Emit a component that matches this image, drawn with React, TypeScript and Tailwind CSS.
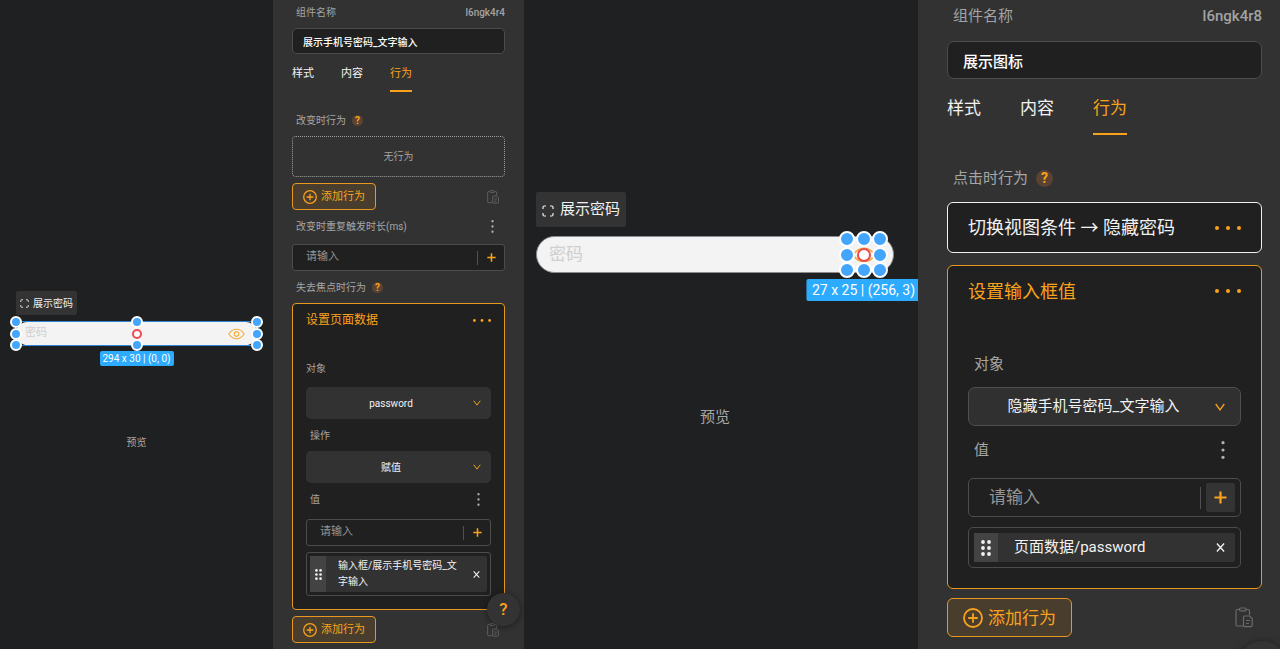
import clsx from "clsx";
import type { ReactNode } from "react";

type Sized = { lg?: boolean };

const handlePositions = [
  "left-0 top-0",
  "left-1/2 top-0",
  "left-full top-0",
  "left-0 top-1/2",
  "left-full top-1/2",
  "left-0 top-full",
  "left-1/2 top-full",
  "left-full top-full",
];

function ScanIcon({ className }: { className?: string }) {
  return (
    <svg viewBox="0 0 12 12" fill="none" stroke="currentColor" strokeWidth="1.2" className={className} aria-hidden="true">
      <path d="M1 4V2.2Q1 1 2.2 1H4M8 1h1.8Q11 1 11 2.2V4M11 8v1.8Q11 11 9.8 11H8M4 11H2.2Q1 11 1 9.8V8" />
    </svg>
  );
}

function EyeIcon({ className }: { className?: string }) {
  return (
    <svg viewBox="0 0 18 12" fill="none" stroke="currentColor" strokeWidth="1.2" strokeLinejoin="round" className={className} aria-hidden="true">
      <path d="M.8 6C3 2.8 5.5 1 9 1s6 1.8 8.200 5C15 9.2 12.500 11 9 11S3 9.2.8 6Z" />
      <path d="m9 3.4 2.300 1.300v2.600L9 8.600 6.700 7.300V4.700Z" />
    </svg>
  );
}

function ClipboardIcon({ className }: { className?: string }) {
  return (
    <svg viewBox="0 0 18 21" fill="none" stroke="currentColor" strokeWidth="1.2" className={className} aria-hidden="true">
      <path d="M4.5 2.5H2.2Q1 2.5 1 3.7v14.1Q1 19 2.2 19H8M11 2.5h2.3q1.2 0 1.2 1.2V8" />
      <rect x="4.5" y="1" width="6.5" height="2.8" rx="1" />
      <path d="M9.7 9h5l2.5 2.5v7q0 1.2-1.2 1.2H9.7q-1.2 0-1.2-1.2v-8.300Q8.5 9 9.7 9ZM11 13.5h4M11 16.5h3" />
    </svg>
  );
}

function PlusCircleIcon({ className }: { className?: string }) {
  return (
    <svg viewBox="0 0 20 20" fill="none" stroke="currentColor" strokeWidth="1.8" className={className} aria-hidden="true">
      <circle cx="10" cy="10" r="9" />
      <path d="M10 5.2v9.6M5.2 10h9.6" />
    </svg>
  );
}

function PlusIcon({ className }: { className?: string }) {
  return (
    <svg viewBox="0 0 14 14" fill="none" stroke="currentColor" strokeWidth="2.4" className={className} aria-hidden="true">
      <path d="M7 .5v13M.5 7h13" />
    </svg>
  );
}

function CloseIcon({ className }: { className?: string }) {
  return (
    <svg viewBox="0 0 10 10" fill="none" stroke="currentColor" strokeWidth="1.5" className={className} aria-hidden="true">
      <path d="m1 .5 8 9M9 .5l-8 9" />
    </svg>
  );
}

function ChevronIcon({ className }: { className?: string }) {
  return (
    <svg viewBox="0 0 10 8" fill="none" stroke="currentColor" strokeWidth="1.3" className={className} aria-hidden="true">
      <path d="M.7 1 5 6.8 9.3 1" />
    </svg>
  );
}

function GripIcon({ className }: { className?: string }) {
  return (
    <svg viewBox="0 0 10 16" fill="currentColor" className={className} aria-hidden="true">
      {[2, 8, 14].map((y) => (
        <g key={y}>
          <circle cx="2" cy={y} r="1.9" />
          <circle cx="8" cy={y} r="1.9" />
        </g>
      ))}
    </svg>
  );
}

function MoreButton({ lg }: Sized) {
  return (
    <button type="button" aria-label="更多" className="text-[#fba21c]">
      <svg viewBox="0 0 26 4" fill="currentColor" className={lg ? "h-1 w-[26px]" : "h-[3px] w-[18px]"}>
        <circle cx="2" cy="2" r="2" />
        <circle cx="13" cy="2" r="2" />
        <circle cx="24" cy="2" r="2" />
      </svg>
    </button>
  );
}

function MenuButton({ lg }: Sized) {
  return (
    <button type="button" aria-label="选项" className={clsx("text-[#b0b0b0]", lg ? "mr-4" : "mr-[11px]")}>
      <svg viewBox="0 0 4 18" fill="currentColor" className={lg ? "h-[18px] w-1" : "h-[13px] w-[3px]"}>
        <circle cx="2" cy="1.7" r="1.6" />
        <circle cx="2" cy="9" r="1.6" />
        <circle cx="2" cy="16.3" r="1.6" />
      </svg>
    </button>
  );
}

function Handles({ lg }: Sized) {
  return (
    <>
      {handlePositions.map((position) => (
        <span
          key={position}
          className={clsx(
            "absolute -translate-1/2 rounded-full border-2 border-white bg-[#43a5fb]",
            lg ? "size-4" : "size-3",
            position,
          )}
        />
      ))}
      <span
        className={clsx(
          "absolute left-1/2 top-1/2 -translate-1/2 rounded-full border-2 border-[#ee4a4f] bg-white",
          lg ? "size-3.5" : "size-2.5",
        )}
      />
    </>
  );
}

function SizeBadge({ lg, children }: Sized & { children: ReactNode }) {
  return (
    <span
      className={clsx(
        "absolute left-1/2 top-full -translate-x-1/2 whitespace-nowrap rounded-[2px] bg-[#2dabff] text-center text-white",
        lg ? "mt-[9px] px-1.5 text-[14px] leading-[22px]" : "mt-1.5 px-[3px] text-[10px] leading-[15px]",
      )}
    >
      {children}
    </span>
  );
}

function ViewChip({ lg }: Sized) {
  return (
    <div
      className={clsx(
        "flex w-fit items-center rounded-[2px] bg-[#333333] text-[#f0f0f0]",
        lg ? "h-[35px] gap-1.5 px-1.5 text-[15px]" : "h-6 gap-1 px-1 text-[10px]",
      )}
    >
      <ScanIcon className={lg ? "mt-0.5 size-3" : "size-[9px]"} />
      展示密码
    </div>
  );
}

function Label({ lg, children }: Sized & { children: ReactNode }) {
  return (
    <div
      className={clsx(
        "flex items-center justify-between text-[#a6a6a6]",
        lg ? "h-[30px] pl-1.5 text-[15px]" : "h-5 pl-1 text-[10px]",
      )}
    >
      {children}
    </div>
  );
}

function EventLabel({ lg, children }: Sized & { children: ReactNode }) {
  return (
    <Label lg={lg}>
      <span className={clsx("flex items-center", lg ? "gap-2" : "gap-1.5")}>
        {children}
        <button
          type="button"
          aria-label="帮助"
          className={clsx(
            "flex items-center justify-center rounded-full bg-[#5a4333] font-bold text-[#fba21c]",
            lg ? "size-[17px] text-[14px]" : "size-[11px] text-[10px]",
          )}
        >
          ?
        </button>
      </span>
    </Label>
  );
}

function PanelHead({ lg, id, name }: Sized & { id: string; name: string }) {
  return (
    <>
      <div
        className={clsx(
          "flex items-center justify-between text-[#a3a3a3]",
          lg ? "h-[33px] pl-1.5 text-[15px]" : "h-6 pl-1 text-[10px]",
        )}
      >
        <label htmlFor={id}>组件名称</label>
        <span className="font-medium">{id}</span>
      </div>
      <input
        id={id}
        defaultValue={name}
        className={clsx(
          "block w-full border border-[#4c4c4c] bg-[#202020] font-medium text-white",
          lg ? "mt-2 h-[38px] rounded-[7px] px-[15px] text-[15px]" : "mt-1 h-[26px] rounded-[5px] px-2.5 text-[10px]",
        )}
      />
      <nav className={clsx("flex text-[#f2f2f2]", lg ? "mt-3.5 gap-[39px] text-[17px]" : "mt-2.5 gap-[27px] text-[11px]")}>
        {["样式", "内容", "行为"].map((tab) => (
          <a
            key={tab}
            href="#"
            className={clsx(
              "border-b-2",
              lg ? "pb-2.5 leading-[30px]" : "pb-1.5 leading-5",
              tab === "行为" ? "border-[#fba21c] text-[#fba21c]" : "border-transparent",
            )}
          >
            {tab}
          </a>
        ))}
      </nav>
    </>
  );
}

function SelectField({ lg, label, value }: Sized & { label: string; value: string }) {
  return (
    <div className="relative">
      <select
        aria-label={label}
        defaultValue={value}
        className={clsx(
          "block w-full appearance-none text-[#f2f2f2] [text-align-last:center]",
          lg
            ? "h-[39px] rounded-[7px] border border-[#4f4f4f] bg-[#303030] pr-[22px] text-[15px]"
            : "h-8 rounded-[5px] bg-[#323232] pr-[15px] text-[10px]",
        )}
      >
        <option>{value}</option>
      </select>
      <ChevronIcon
        className={clsx(
          "pointer-events-none absolute top-1/2 -translate-y-1/2 text-[#fba21c]",
          lg ? "right-4 h-2 w-2.5" : "right-2.5 h-1.5 w-2",
        )}
      />
    </div>
  );
}

function ValueInput({ lg, label }: Sized & { label: string }) {
  return (
    <div
      className={clsx(
        "flex items-center border border-[#4c4c4c] bg-[#202020]",
        lg ? "h-[39px] rounded-[5px] pr-[5px]" : "h-[27px] rounded-[3px]",
      )}
    >
      <input
        aria-label={label}
        placeholder="请输入"
        className={clsx(
          "min-w-0 flex-1 bg-transparent text-white placeholder:text-[#959595]",
          lg ? "pl-5 text-[17px]" : "pl-[13px] text-[11px]",
        )}
      />
      <span className={clsx("w-px bg-[#505050]", lg ? "h-[22px]" : "h-3.5")} />
      <button
        type="button"
        aria-label="添加"
        className={clsx(
          "flex items-center justify-center text-[#fba21c]",
          lg ? "ml-[5px] size-[29px] rounded-[2px] bg-[#343434]" : "h-full w-[26px]",
        )}
      >
        <PlusIcon className={lg ? "size-[13px]" : "size-[9px]"} />
      </button>
    </div>
  );
}

function BoundValue({ lg, children }: Sized & { children: ReactNode }) {
  return (
    <div
      className={clsx(
        "flex border border-[#4c4c4c]",
        lg ? "mt-2.5 h-[41px] rounded-[5px] p-[5px]" : "mt-1.5 h-11 rounded-[3px] p-[3px]",
      )}
    >
      <div className="flex min-w-0 flex-1 items-center rounded-[2px] bg-[#323232] text-[#f2f2f2]">
        <span className={clsx("flex h-full shrink-0 items-center justify-center bg-[#434343]", lg ? "w-6" : "w-4")}>
          <GripIcon className={lg ? "h-4 w-2.5" : "h-[11px] w-[7px]"} />
        </span>
        <span className={clsx("flex-1", lg ? "pl-4 text-[15px]" : "px-3 text-[10px] leading-4")}>{children}</span>
        <button type="button" aria-label="移除" className={lg ? "mr-2.5" : "mr-[7px]"}>
          <CloseIcon className={lg ? "size-[9px]" : "size-[7px]"} />
        </button>
      </div>
    </div>
  );
}

function AddRow({ lg, className }: Sized & { className: string }) {
  return (
    <div className={clsx("flex items-center justify-between", className)}>
      <button
        type="button"
        className={clsx(
          "flex items-center border border-[#e8971f] bg-[#493d2e] text-[#fba21c]",
          lg
            ? "h-[39px] gap-[5px] rounded-[6px] px-[15px] text-[17px] leading-6"
            : "h-[27px] gap-1 rounded-[4px] px-2.5 text-[11px] leading-4",
        )}
      >
        <PlusCircleIcon className={lg ? "size-5" : "size-3.5"} />
        添加行为
      </button>
      <button type="button" aria-label="粘贴行为" className={clsx("text-[#6a6a6a]", lg ? "mr-[9px]" : "mr-1.5")}>
        <ClipboardIcon className={lg ? "h-[21px] w-[18px]" : "h-3.5 w-3"} />
      </button>
    </div>
  );
}

function InputCanvas() {
  return (
    <section className="overflow-hidden px-4 pt-[291px]">
      <ViewChip />
      <div className="relative mt-1.5 h-[25px] border-y border-[#2f86d6]">
        <div className="flex h-full items-center justify-between rounded-full bg-[#f3f3f3] pl-[9px] pr-3">
          <input
            aria-label="密码"
            placeholder="密码"
            className="min-w-0 flex-1 bg-transparent text-[11px] text-black placeholder:text-[#cfcfcf]"
          />
          <EyeIcon className="h-3 w-[17px] text-[#f7ab3c]" />
        </div>
        <Handles />
        <SizeBadge>294 x 30 | (0, 0)</SizeBadge>
      </div>
      <p className="mt-[87px] text-center text-[10px] leading-5 text-[#a8a8a8]">预览</p>
    </section>
  );
}

function IconCanvas() {
  return (
    <section className="overflow-hidden pl-3 pr-6 pt-48">
      <ViewChip lg />
      <div className="mt-[9px] flex h-[37px] items-center rounded-full border border-[#8c8c8c] bg-[#f3f3f3] pl-3 pr-[13px]">
        <input
          aria-label="密码"
          placeholder="密码"
          className="min-w-0 flex-1 bg-transparent text-[17px] text-black placeholder:text-[#cfcfcf]"
        />
        <div className="relative flex h-[31px] w-[33px] items-center justify-center">
          <EyeIcon className="h-4 w-6 text-[#f7ab3c]" />
          <Handles lg />
          <SizeBadge lg>27 x 25 | (256, 3)</SizeBadge>
        </div>
      </div>
      <p className="mt-[129px] text-center text-[15px] leading-[30px] text-[#a8a8a8]">预览</p>
    </section>
  );
}

function InputPanel() {
  return (
    <aside className="relative bg-[#323232] px-[19px]">
      <PanelHead id="l6ngk4r4" name="展示手机号密码_文字输入" />
      <div className="mt-[18px]">
        <EventLabel>改变时行为</EventLabel>
      </div>
      <div className="mt-1.5 flex h-[41px] items-center justify-center rounded-[4px] border border-dotted border-[#a0a0a0] text-[10px] text-[#a3a3a3]">
        无行为
      </div>
      <AddRow className="mt-1.5" />
      <div className="mt-1.5">
        <Label>
          改变时重复触发时长(ms)
          <MenuButton />
        </Label>
      </div>
      <div className="mt-2">
        <ValueInput label="改变时重复触发时长(ms)" />
      </div>
      <div className="mt-1.5">
        <EventLabel>失去焦点时行为</EventLabel>
      </div>

      <div className="mt-1.5 rounded-[4px] border border-[#e8971f] bg-[#202020] px-[13px] pb-[13px]">
        <div className="flex h-8 items-center justify-between text-[12px] text-[#fba21c]">
          设置页面数据
          <MoreButton />
        </div>
        <p className="mb-2 mt-[23px] text-[10px] leading-5 text-[#a6a6a6]">对象</p>
        <SelectField label="对象" value="password" />
        <div className="my-1.5">
          <Label>操作</Label>
        </div>
        <SelectField label="操作" value="赋值" />
        <div className="mb-2.5 mt-1.5">
          <Label>
            值
            <MenuButton />
          </Label>
        </div>
        <ValueInput label="值" />
        <BoundValue>输入框/展示手机号密码_文字输入</BoundValue>
      </div>
      <AddRow className="mt-1.5" />

      <button
        type="button"
        aria-label="帮助中心"
        className="absolute right-1 top-[593px] size-[33px] rounded-full bg-[#333333] text-[17px] font-medium text-[#fba21c] shadow-[0_1px_6px_rgba(0,0,0,0.45)]"
      >
        ?
      </button>
    </aside>
  );
}

function IconPanel() {
  return (
    <aside className="relative overflow-hidden bg-[#323232] pl-[29px] pr-[18px]">
      <PanelHead lg id="l6ngk4r8" name="展示图标" />
      <div className="mt-7">
        <EventLabel lg>点击时行为</EventLabel>
      </div>
      <div className="mt-[9px] flex h-[51px] items-center justify-between rounded-[6px] border border-[#f0f0f0] bg-[#202020] px-5 text-[18px] text-[#f2f2f2]">
        切换视图条件 → 隐藏密码
        <MoreButton lg />
      </div>

      <div className="mt-3 rounded-[6px] border border-[#e8971f] bg-[#202020] px-5 pb-5">
        <div className="flex h-[50px] items-center justify-between text-[18px] text-[#fba21c]">
          设置输入框值
          <MoreButton lg />
        </div>
        <div className="mb-2 mt-[33px]">
          <Label lg>对象</Label>
        </div>
        <SelectField lg label="对象" value="隐藏手机号密码_文字输入" />
        <div className="mb-[13px] mt-[9px]">
          <Label lg>
            值
            <MenuButton lg />
          </Label>
        </div>
        <ValueInput lg label="值" />
        <BoundValue lg>页面数据/password</BoundValue>
      </div>
      <AddRow lg className="mt-[9px]" />
      <span className="absolute -bottom-10 right-[-6px] size-12 rounded-full bg-[#333333] shadow-[0_1px_8px_rgba(0,0,0,0.45)]" />
    </aside>
  );
}

export default function App() {
  return (
    <main className="grid min-h-screen grid-cols-[273fr_251fr_394fr_362fr] overflow-hidden bg-[#1f2022] font-[Roboto,'Noto_Sans_CJK_SC',sans-serif]">
      <InputCanvas />
      <InputPanel />
      <IconCanvas />
      <IconPanel />
    </main>
  );
}
